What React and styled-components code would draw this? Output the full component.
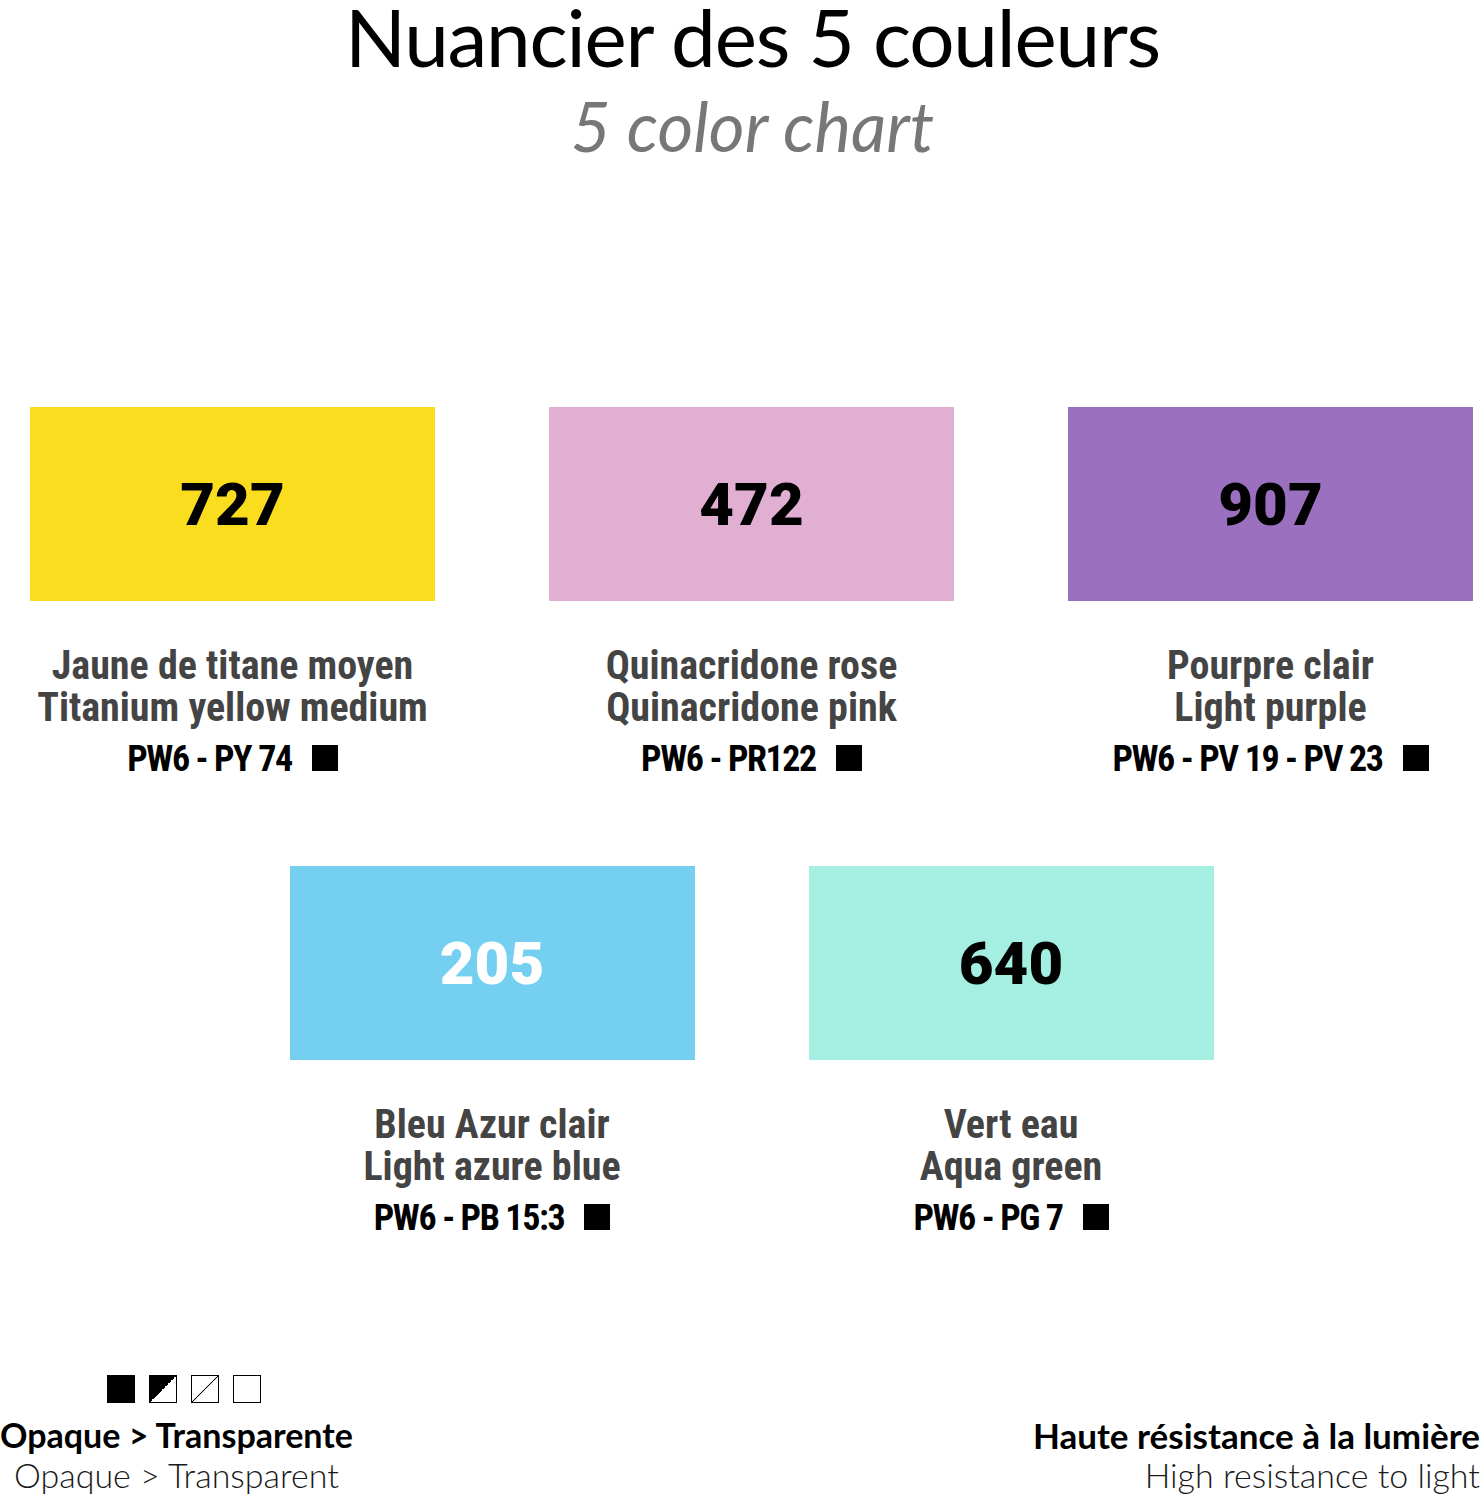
import React from 'react';
import styled, { createGlobalStyle, css } from 'styled-components';

const GlobalStyle = createGlobalStyle`
  html, body {
    margin: 0;
    padding: 0;
    background: #ffffff;
  }
  body {
    font-family: Lato, "Noto Sans", sans-serif;
  }
`;

const Page = styled.div`
  width: 1483px;
  height: 1500px;
  display: flex;
  flex-direction: column;
  overflow: hidden;
  background: #ffffff;
`;

const Header = styled.header`
  text-align: center;
  padding-left: 22px;
`;

const Title = styled.h1`
  margin: 0;
  font-family: Lato, "Noto Sans", sans-serif;
  font-weight: 400;
  font-size: 80px;
  line-height: 72px;
  letter-spacing: -1.2px;
  color: #000;
`;

const Subtitle = styled.h2`
  margin: 0;
  font-family: Lato, "Noto Sans", sans-serif;
  font-weight: 400;
  font-style: italic;
  font-size: 69px;
  line-height: 108px;
  color: #777;
`;

const Chart = styled.section`
  width: 1443px;
  margin: 227px 0 0 30px;
  display: flex;
  flex-direction: column;
  gap: 85px;
`;

const Row = styled.div`
  display: flex;
  justify-content: center;
  gap: 114px;
`;

const Card = styled.div`
  width: 405px;
  display: flex;
  flex-direction: column;
  align-items: center;
`;

const Swatch = styled.div`
  width: 405px;
  height: 194px;
  background: ${p => p.$color};
  display: flex;
  align-items: center;
  justify-content: center;
  font-family: Roboto, "DejaVu Sans", sans-serif;
  font-weight: 900;
  font-size: 60px;
  color: ${p => (p.$light ? '#ffffff' : '#000000')};
`;

const Labels = styled.div`
  margin-top: 44px;
  text-align: center;
  font-family: "Liberation Sans Narrow", "Arial Narrow", Roboto, sans-serif;
  font-stretch: condensed;
  font-weight: 700;
`;

const Name = styled.div`
  font-size: 40px;
  line-height: 42px;
  color: #444;
`;

const Pigments = styled.div`
  margin-top: 8px;
  font-size: 36px;
  line-height: 44px;
  letter-spacing: -1.4px;
  color: #000;
`;

const Dot = styled.span`
  display: inline-block;
  width: 26px;
  height: 26px;
  margin-left: 20px;
  background: #000;
`;

const Footer = styled.footer`
  margin-top: auto;
  padding: 0 3px 5px 0;
  display: flex;
  justify-content: space-between;
  align-items: flex-end;
`;

const Legend = styled.div`
  display: flex;
  flex-direction: column;
  align-items: center;
`;

const Scale = styled.div`
  display: flex;
  gap: 14px;
  margin: 0 0 12px 16px;
`;

const Box = styled.span`
  width: 28px;
  height: 28px;
  box-sizing: border-box;
  border: 1.5px solid #000;
  background: #fff;
  ${p => p.$kind === 'full' && css`
    background: #000;
  `}
  ${p => p.$kind === 'half' && css`
    background: linear-gradient(to bottom right, #000 50%, #fff 50%);
  `}
  ${p => p.$kind === 'line' && css`
    background: linear-gradient(to bottom right, #fff calc(50% - 0.8px), #000 50%, #fff calc(50% + 0.8px));
  `}
`;

const Strong = styled.div`
  font-family: Lato, "Noto Sans", sans-serif;
  font-weight: 700;
  font-size: ${p => (p.$wide ? '35px' : '34px')};
  line-height: 40px;
  color: #000;
`;

const Light = styled.div`
  font-family: Lato, "Noto Sans", sans-serif;
  font-weight: 300;
  font-size: 34px;
  line-height: 40px;
  color: #1a1a1a;
`;

const Note = styled.div`
  text-align: right;
`;

const colors = [
  [
    { code: '727', color: '#fbdd1f', fr: 'Jaune de titane moyen', en: 'Titanium yellow medium', pig: 'PW6 - PY 74' },
    { code: '472', color: '#e0afd2', fr: 'Quinacridone rose', en: 'Quinacridone pink', pig: 'PW6 - PR122' },
    { code: '907', color: '#9b70be', fr: 'Pourpre clair', en: 'Light purple', pig: 'PW6 - PV 19 - PV 23' },
  ],
  [
    { code: '205', color: '#74cff1', fr: 'Bleu Azur clair', en: 'Light azure blue', pig: 'PW6 - PB 15:3', light: true },
    { code: '640', color: '#a4efe2', fr: 'Vert eau', en: 'Aqua green', pig: 'PW6 - PG 7' },
  ],
];

const App = () => (
  <Page>
    <GlobalStyle />
    <Header>
      <Title>Nuancier des 5 couleurs</Title>
      <Subtitle>5 color chart</Subtitle>
    </Header>

    <Chart>
      {colors.map((row, i) => (
        <Row key={i}>
          {row.map(c => (
            <Card key={c.code}>
              <Swatch $color={c.color} $light={c.light}>{c.code}</Swatch>
              <Labels>
                <Name>{c.fr}</Name>
                <Name>{c.en}</Name>
                <Pigments>
                  {c.pig}
                  <Dot />
                </Pigments>
              </Labels>
            </Card>
          ))}
        </Row>
      ))}
    </Chart>

    <Footer>
      <Legend>
        <Scale>
          <Box $kind="full" />
          <Box $kind="half" />
          <Box $kind="line" />
          <Box />
        </Scale>
        <Strong>Opaque &gt; Transparente</Strong>
        <Light>Opaque &gt; Transparent</Light>
      </Legend>
      <Note>
        <Strong $wide>Haute résistance à la lumière</Strong>
        <Light>High resistance to light</Light>
      </Note>
    </Footer>
  </Page>
);

export default App;
